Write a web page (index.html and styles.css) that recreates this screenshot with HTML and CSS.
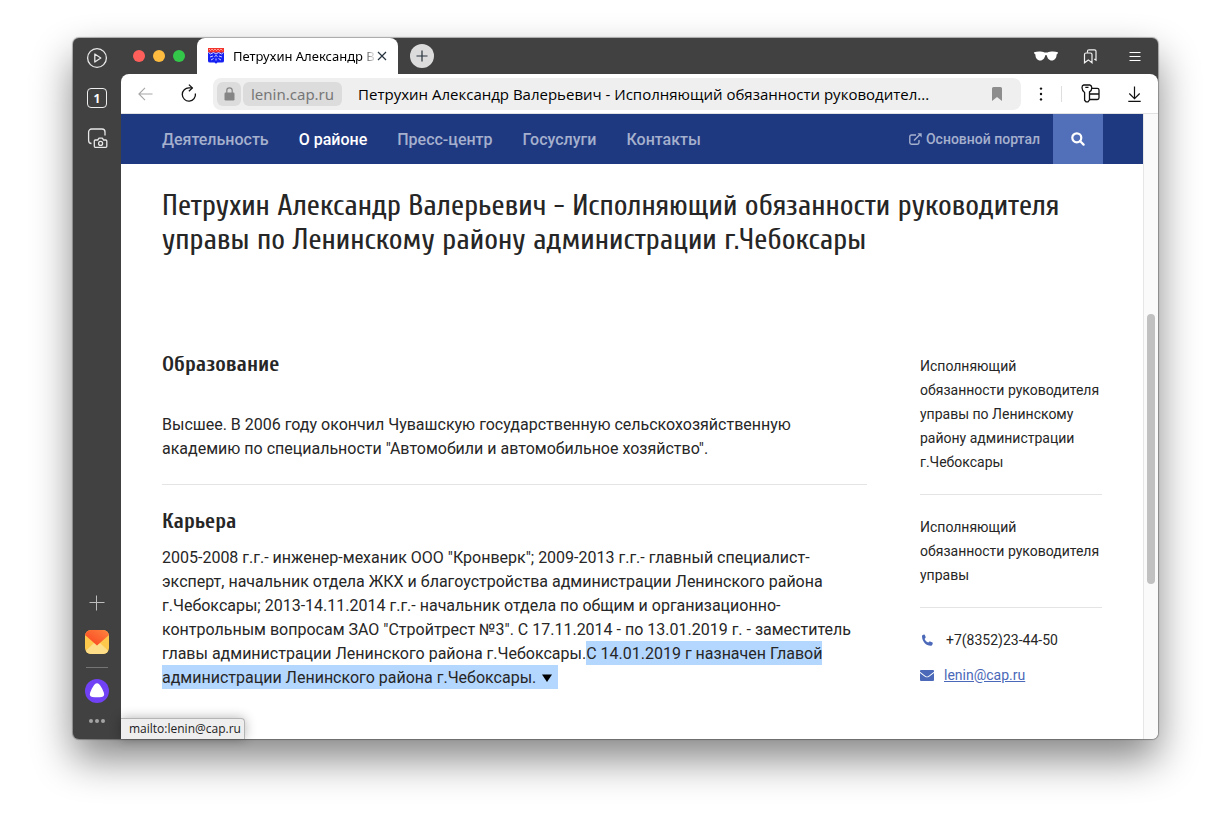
FILE: index.html
```html
<!DOCTYPE html>
<html lang="ru">
<head>
<meta charset="utf-8">
<meta name="viewport" content="width=device-width, initial-scale=1">
<title>Петрухин Александр Валерьевич</title>
<link rel="stylesheet" href="styles.css">
</head>
<body>
<div class="window">
  <aside class="rail">
    <div class="rail-group">
      <button class="icon-btn" aria-label="Видео"><svg width="22" height="22" viewBox="0 0 22 22" fill="none" stroke="#e8e8e8" stroke-width="1.3"><circle cx="11" cy="11" r="9.4"/><path d="M8.8 7v8l6-4z" stroke-linejoin="round"/></svg></button>
      <button class="icon-btn tab-count" aria-label="Вкладки">1</button>
      <button class="icon-btn" aria-label="Снимок экрана"><svg width="22" height="22" viewBox="0 0 22 22" fill="none" stroke="#e8e8e8" stroke-width="1.3" stroke-linejoin="round"><path d="M5.500 16.500A3 3 0 0 1 2.600 13.500V5a3 3 0 0 1 3-3H16a3 3 0 0 1 3 3v3.500"/><path d="M9.300 13h2.400l1.300-1.800h3.300l1.300 1.800h2.200c.6 0 1 .4 1 1v5.300c0 .6-.4 1-1 1H9.300c-.6 0-1-.4-1-1V14c0-.6.4-1 1-1z"/><circle cx="14.600" cy="16.400" r="2"/></svg></button>
    </div>
    <div class="rail-group rail-bottom">
      <button class="icon-btn small" aria-label="Добавить"><svg width="16" height="16" viewBox="0 0 16 16" stroke="#bdbdbd" stroke-width="1"><path d="M.5 7.500h15M7.500 .5v15"/></svg></button>
      <button class="icon-btn large" aria-label="Почта"><svg width="24" height="24" viewBox="0 0 24 24"><defs><linearGradient id="flap" x1="0" y1="1" x2="1" y2="0"><stop offset="0" stop-color="#fb3f1d"/><stop offset="1" stop-color="#fc8440"/></linearGradient><clipPath id="mail"><rect width="24" height="24" rx="6"/></clipPath></defs><g clip-path="url(#mail)"><rect width="24" height="24" fill="#fdc84c"/><path d="M0 24V21.500L9 13h6l9 8.500V24z" fill="#fddd87"/><path d="M0 0h24v5L12 15.500 0 5z" fill="url(#flap)"/></g></svg></button>
      <span class="rail-line"></span>
      <button class="icon-btn large" aria-label="Алиса"><svg width="24" height="24" viewBox="0 0 24 24"><circle cx="12" cy="12" r="12" fill="#7142f5"/><path d="M12 4.200c1.600 0 2.400 1.100 3.200 2.300 1.400 2.100 2.700 4.600 3.600 6.900.9 2.400.2 4-2.200 4.500-2.800.5-6.400.5-9.200 0-2.400-.5-3.100-2.100-2.200-4.500.9-2.300 2.200-4.800 3.600-6.900.8-1.200 1.600-2.300 3.200-2.300z" fill="#fff"/></svg></button>
      <button class="icon-btn dots" aria-label="Ещё"><svg width="16" height="4" viewBox="0 0 16 4" fill="#a3a3a3"><circle cx="2" cy="2" r="2"/><circle cx="8" cy="2" r="2"/><circle cx="14" cy="2" r="2"/></svg></button>
    </div>
  </aside>

  <div class="browser">
    <div class="tabstrip">
      <div class="lights"><span class="light red"></span><span class="light yellow"></span><span class="light green"></span></div>
      <div class="tab">
        <svg width="16" height="16" viewBox="0 0 16 16"><path d="M0 4h16v9q0 1.500-2 1.500h-4.500L8 15.800 6.500 14.500H2q-2 0-2-1.500z" fill="#1721f2"/><path d="M0 0h16v4.500H0z" fill="#f2352d"/><path d="M1 1l1.500 1.500L4 1l1.500 1.500L7 1l1.500 1.500L10 1l1.500 1.500L13 1l1.500 1.500" fill="none" stroke="#ffb9b5" stroke-width=".8"/><path d="M.5 4.500l2 1.500 3-1.500L8 6l2.500-1.500 3 1.500 2-1.500M2 9l3-1M6.500 8.500L8 7.500l1.500 1M11 8l3 1M3 12l2.500-1.500M8 10.500v2M10.500 10.500L13 12" fill="none" stroke="#cdd0ff" stroke-width="1"/></svg>
        <span class="tab-title">Петрухин Александр В</span>
        <button class="close" aria-label="Закрыть"><svg width="10" height="10" viewBox="0 0 10 10" stroke="#26323d" stroke-width="1.200"><path d="M1 1l8 8M9 1L1 9"/></svg></button>
      </div>
      <button class="new-tab" aria-label="Новая вкладка"><svg width="12" height="12" viewBox="0 0 12 12" stroke="#26323d" stroke-width="1.200"><path d="M.5 6h11M6 .5v11"/></svg></button>
      <div class="strip-tools">
        <button class="icon-btn" aria-label="Инкогнито"><svg width="24" height="10" viewBox="0 0 24 10" fill="#fff"><path d="M0 1.300C3 .2 8 .2 10.500 1.600q1.500-.4 3 0C16 .2 21 .2 24 1.300l-.4 1.500-1 .6c0 3.600-2 6-4.800 6-2.800 0-4.600-2.500-4.900-5q-.9-.6-1.800 0c-.3 2.500-2.100 5-4.900 5s-4.800-2.400-4.800-6l-1-.6z"/></svg></button>
        <button class="icon-btn" aria-label="Закладки"><svg width="14" height="15" viewBox="0 0 14 15" fill="none" stroke="#f2f2f2" stroke-width="1.200"><path d="M1.500 13.800V5.500q0-1.500 1.500-1.500h4.500Q9 4 9 5.500v8.300l-3.700-2.900z"/><path d="M4.500 3.800V2.300q0-1.500 1.500-1.500h5.500q1.500 0 1.500 1.500v8.800l-1.700-1.200"/></svg></button>
        <button class="icon-btn" aria-label="Меню"><svg width="12" height="11" viewBox="0 0 12 11" stroke="#fff" stroke-width="1"><path d="M.5 1.500h11M.5 5.500h11M.5 9.500h11"/></svg></button>
      </div>
    </div>

    <div class="toolbar-back">
      <div class="toolbar">
        <button class="tool back" aria-label="Назад"><svg width="15" height="14" viewBox="0 0 15 14" fill="none" stroke="#a6a6a6" stroke-width="1.100"><path d="M14.500 7H1M7 .8L.9 7 7 13.200"/></svg></button>
        <button class="tool reload" aria-label="Обновить"><svg width="16" height="18" viewBox="0 0 16 18" fill="none" stroke="#111" stroke-width="1.300"><path d="M14.400 9.500A6.600 6.600 0 1 1 8.200 3.900h3.200"/><path d="M7.900.6l3.400 3.300L7.900 7.200"/></svg></button>
        <div class="omnibox">
          <span class="lock"><svg width="11" height="14" viewBox="0 0 11 14"><path d="M2.800 6V3.600a2.700 2.700 0 0 1 5.400 0V6" fill="none" stroke="#858585" stroke-width="1.200"/><rect x=".5" y="5.500" width="10" height="8" rx="1.200" fill="#858585"/></svg></span>
          <span class="host">lenin.cap.ru</span>
          <span class="page-name">Петрухин Александр Валерьевич - Исполняющий обязанности руководител...</span>
          <button class="tool" aria-label="В закладки"><svg width="10" height="14" viewBox="0 0 10 14" fill="#8d8d8d"><path d="M0 1.500Q0 0 1.500 0h7Q10 0 10 1.500V14l-5-4-5 4z"/></svg></button>
        </div>
        <button class="tool more" aria-label="Дополнительно"><svg width="4" height="14" viewBox="0 0 4 14" fill="#111"><circle cx="2" cy="1.600" r="1.200"/><circle cx="2" cy="7" r="1.200"/><circle cx="2" cy="12.400" r="1.200"/></svg></button>
        <span class="divider"></span>
        <button class="tool keys" aria-label="Пароли"><svg width="19" height="19" viewBox="0 0 19 19" fill="none" stroke="#111" stroke-width="1.300" stroke-linejoin="round"><path d="M2.700 1h6.100q2 .5 2 2.700 0 3-2.300 4.200v8L7 17.800H5L3.600 16.200V8.500Q1.200 7 1 3.700 1 1.300 2.700 1zM4.300 3.300h3.200"/><path d="M11 4.300h5.300q1.700 0 1.700 1.700v7.800q0 1.700-1.700 1.700H8.800M9 10h9"/></svg></button>
        <button class="tool" aria-label="Загрузки"><svg width="13" height="16" viewBox="0 0 13 16" fill="none" stroke="#111" stroke-width="1.200"><path d="M6.500.5v12M1.300 7.500l5.200 5.200 5.200-5.200M.3 15.400h12.400"/></svg></button>
      </div>
    </div>

    <div class="viewport">
      <div class="page">
        <nav class="nav">
          <a href="#">Деятельность</a>
          <a href="#" class="current">О районе</a>
          <a href="#">Пресс-центр</a>
          <a href="#">Госуслуги</a>
          <a href="#">Контакты</a>
          <a href="#" class="portal"><svg width="13" height="12" viewBox="0 0 13 12" fill="none" stroke="#a5b0cd" stroke-width="1.400"><path d="M7 2H2.500Q.8 2 .8 3.700v5.800q0 1.700 1.700 1.700h5.800q1.700 0 1.700-1.700V7"/><path d="M5 7.500l6-6"/><path d="M8.500.3h4.200v4.200z" fill="#a5b0cd" stroke="none"/></svg>Основной портал</a>
          <button class="search" aria-label="Поиск"><svg width="14" height="14" viewBox="0 0 14 14" fill="none" stroke="#fff" stroke-width="2.200"><circle cx="5.800" cy="5.800" r="4.500"/><path d="M9 9l3.600 3.600" stroke-linecap="round"/></svg></button>
        </nav>
        <main class="content">
          <h1>Петрухин Александр Валерьевич - Исполняющий обязанности руководителя управы по Ленинскому району администрации г.Чебоксары</h1>
          <div class="columns">
            <article>
              <section class="education">
                <h2>Образование</h2>
                <p>Высшее. В 2006 году окончил Чувашскую государственную сельскохозяйственную академию по специальности "Автомобили и автомобильное хозяйство".</p>
              </section>
              <section class="career">
                <h2>Карьера</h2>
                <p>2005-2008 г.г.- инженер-механик ООО "Кронверк"; 2009-2013 г.г.- главный специалист-эксперт, начальник отдела ЖКХ и благоустройства администрации Ленинского района г.Чебоксары; 2013-14.11.2014 г.г.- начальник отдела по общим и организационно-контрольным вопросам ЗАО "Стройтрест №3". С 17.11.2014 - по 13.01.2019 г. - заместитель главы администрации Ленинского района г.Чебоксары.<mark>С 14.01.2019 г назначен Главой администрации Ленинского района г.Чебоксары.<svg class="caret" width="22" height="22" viewBox="0 0 22 22"><path d="M6 7.500h10L11 15z" fill="#000"/></svg></mark></p>
              </section>
            </article>
            <aside class="card">
              <p>Исполняющий обязанности руководителя управы по Ленинскому району администрации г.Чебоксары</p>
              <p>Исполняющий обязанности руководителя управы</p>
              <div class="contact phone"><svg width="14" height="12" viewBox="0 0 14 12" fill="#4b69b8"><path d="M2.400 1.200L4 .5q.5-.1.700.3l1 2.300q.1.400-.2.700L4.600 4.900c.8 1.700 2 2.900 3.700 3.700l1.100-1q.3-.3.700-.1l2.400 1q.4.300.3.700l-.6 1.700q-.2.700-1.200.8C6 11.800 2.200 7.500 2 2.200q0-.8.400-1z"/></svg>+7(8352)23-44-50</div>
              <div class="contact mail"><svg width="14" height="11" viewBox="0 0 14 11" fill="#4b69b8"><path d="M1 0h12q1 0 1 1v.7L8.500 5.900q-1.500 1-3 0L0 1.700V1q0-1 1-1z"/><path d="M0 3l5 3.700q2 1.200 4 0L14 3v7q0 1-1 1H1q-1 0-1-1z"/></svg><a href="mailto:lenin@cap.ru">lenin@cap.ru</a></div>
            </aside>
          </div>
        </main>
      </div>
      <div class="scrollbar"><div class="thumb"></div></div>
      <div class="status">mailto:lenin@cap.ru</div>
    </div>
  </div>
</div>
</body>
</html>
```
FILE: styles.css
```css
* { box-sizing: border-box; }
body {
  margin: 0;
  min-height: 100vh;
  padding: 38px 56px 74px 73px;
  display: flex;
  background: #fff;
  font-family: Roboto, sans-serif;
  color: #262626;
}
button { border: 0; padding: 0; margin: 0; background: none; color: inherit; font: inherit; }
svg { display: block; flex: none; }
h1, h2, p { margin: 0; }

.window {
  flex: 1;
  display: flex;
  min-width: 0;
  background: #414141;
  border-radius: 6px;
  box-shadow: 0 0 1px 1px rgba(0, 0, 0, .3), 0 20px 40px rgba(0, 0, 0, .48);
}

/* side rail */
.rail {
  width: 48px;
  padding: 9px 0 16px;
  display: flex;
  flex-direction: column;
  justify-content: space-between;
}
.rail-group { display: flex; flex-direction: column; align-items: center; gap: 18px; }
.icon-btn { display: flex; align-items: center; justify-content: center; }
.tab-count {
  width: 20px;
  height: 20px;
  margin: 1px 0;
  border: 1px solid #eee;
  border-radius: 4px;
  color: #fff;
  font: bold 12px "Noto Sans", sans-serif;
}
.rail-bottom { gap: 0; }
.rail-bottom .large { margin-top: 11px; }
.rail-bottom .small { margin-bottom: 8px; }
.rail-line { width: 22px; height: 1px; margin-top: 13px; background: #757575; }
.rail-bottom .dots { margin-top: 16px; }

/* browser chrome */
.browser { flex: 1; min-width: 0; display: flex; flex-direction: column; }
.tabstrip { height: 36px; padding: 0 17px 0 12px; display: flex; align-items: center; }
.lights { display: flex; gap: 8px; }
.light { width: 12px; height: 12px; border-radius: 50%; }
.red { background: #ff5f5b; }
.yellow { background: #fdbc40; }
.green { background: #34c84a; }
.tab {
  width: 201px;
  align-self: stretch;
  margin-left: 12px;
  padding: 0 12px 0 11px;
  display: flex;
  align-items: center;
  background: #fff;
  border-radius: 8px 8px 0 0;
}
.tab-title {
  margin: 0 2px 0 9px;
  white-space: nowrap;
  font: 13px "Noto Sans", sans-serif;
  color: transparent;
  background: linear-gradient(90deg, #000 91%, #ccc 98%);
  background-clip: text;
}
.new-tab {
  width: 24px;
  height: 24px;
  margin-left: 12px;
  display: grid;
  place-items: center;
  background: #dcdcdc;
  border-radius: 50%;
}
.strip-tools { margin-left: auto; display: flex; align-items: center; gap: 25px; }
.strip-tools .icon-btn:last-child { margin-left: 7px; }
.toolbar-back { background: #414141; }
.toolbar {
  height: 40px;
  padding: 0 17px;
  display: flex;
  align-items: center;
  background: #fff;
  border-bottom: 1px solid #e2e2e2;
  border-radius: 8px 8px 0 0;
}
.reload { margin: 0 16px 2px 28px; }
.omnibox {
  flex: 1;
  min-width: 0;
  height: 32px;
  padding: 0 19px 0 4px;
  display: flex;
  align-items: center;
  gap: 2px;
  background: #efefef;
  border-radius: 8px;
  font: 15px "Noto Sans", sans-serif;
}
.lock, .host { height: 24px; display: flex; align-items: center; background: #dcdcdc; border-radius: 6px; }
.lock { width: 24px; justify-content: center; }
.host { padding: 0 8px; color: #777; }
.page-name { flex: 1; margin-left: 14px; overflow: hidden; white-space: nowrap; color: #000; font: 15px "Open Sans", sans-serif; }
.more { margin-left: 18px; }
.divider { width: 1px; height: 16px; margin: 0 19px 0 18px; background: #dedede; }
.keys { margin-right: 28px; }

/* page */
.viewport {
  flex: 1;
  position: relative;
  display: flex;
  background: #fff;
  border-radius: 0 0 6px 0;
}
.page { flex: 1; min-width: 0; }
.nav {
  height: 50px;
  padding: 0 40px 0 41px;
  display: flex;
  align-items: center;
  gap: 30px;
  background: #1f3981;
  font-size: 16px;
  font-weight: 500;
}
.nav a { color: #a5b0cd; text-decoration: none; white-space: nowrap; }
.nav .current { color: #fff; }
.nav .portal { margin-left: auto; display: flex; align-items: center; gap: 4px; font-size: 14px; }
.search {
  width: 50px;
  align-self: stretch;
  margin-left: -17px;
  display: grid;
  place-items: center;
  background: #5270b9;
}
.content { padding: 25px 41px 40px; }
h1, h2 { font-family: Cuprum, "Roboto Condensed", Roboto, sans-serif; }
h1 { font-size: 30px; line-height: 34px; font-weight: 400; }
h2 { font-size: 22px; line-height: 24px; font-weight: 700; }
.columns { margin-top: 95px; display: grid; grid-template-columns: 1fr 182px; gap: 53px; }
article p { font-size: 16px; line-height: 24px; }
.education { padding-bottom: 23px; border-bottom: 1px solid #e4e4e4; }
.education p { margin-top: 37px; }
.career { padding-top: 24px; }
.career p { margin-top: 13px; }
mark { background: #b4d7ff; color: inherit; padding: 3px 0 2px; }
.caret { display: inline-block; vertical-align: -6px; }
.card { padding-top: 2px; font-size: 14px; line-height: 24px; }
.card p { padding-bottom: 20px; margin-bottom: 20px; border-bottom: 1px solid #e4e4e4; }
.contact { display: flex; align-items: center; gap: 10px; }
.phone { gap: 12px; margin-bottom: 11px; }
.contact a { color: #4b69b8; }

.scrollbar { width: 15px; padding: 200px 3px 0; background: #fafafa; border-left: 1px solid #e6e6e6; border-radius: 0 0 6px 0; }
.thumb { width: 8px; height: 270px; border-radius: 4px; background: #c1c1c1; }
.status {
  position: absolute;
  left: 0;
  bottom: 0;
  padding: 0 3px 0 8px;
  background: #eee;
  border: 1px solid #b5b5b5;
  border-width: 1px 1px 0 0;
  border-radius: 0 4px 0 0;
  box-shadow: 0 0 12px rgba(0, 0, 0, .3);
  font: 12px/20px "Open Sans", sans-serif;
  color: #222;
}
```
